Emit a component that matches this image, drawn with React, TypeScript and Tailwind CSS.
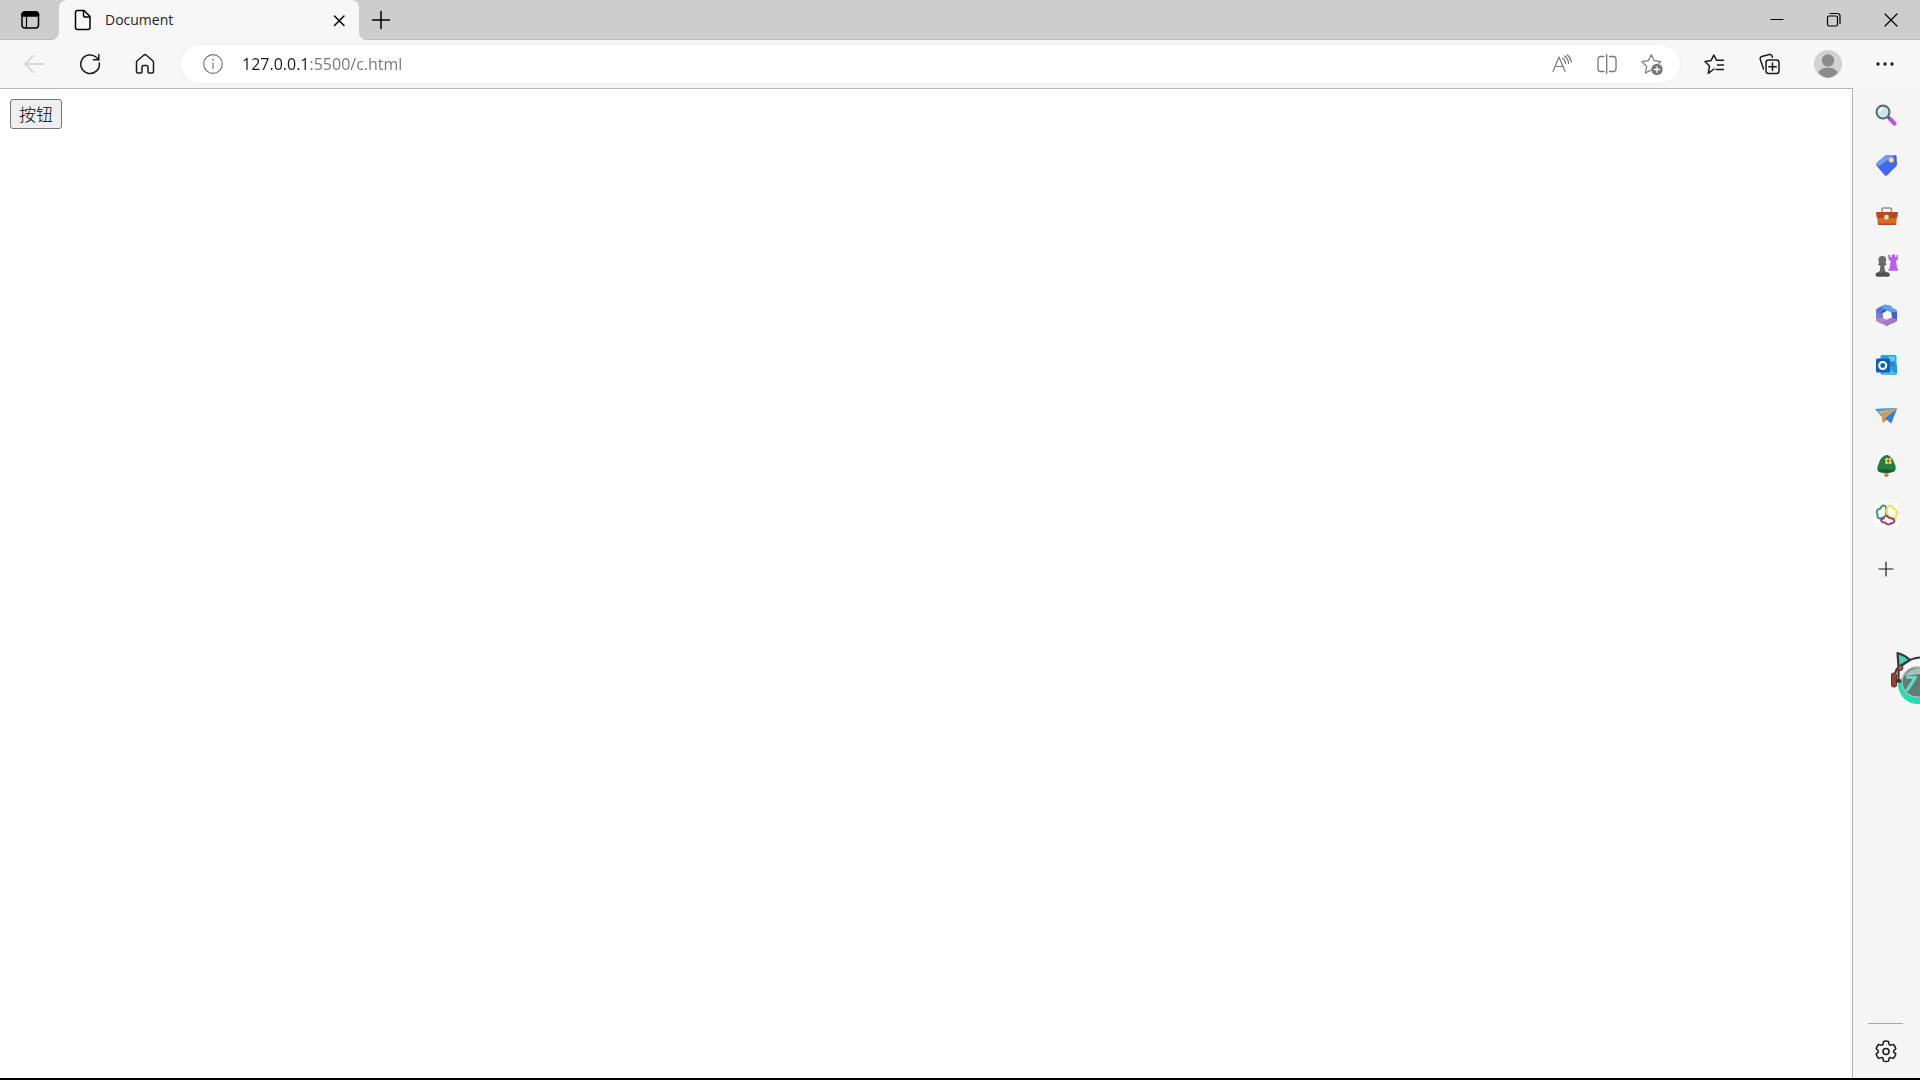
import type { ReactNode } from "react";

interface IconProps {
  size?: number;
  children: ReactNode;
}

// Stroked icon on a square grid, one unit per pixel
const LineIcon = ({ size = 24, children }: IconProps) => (
  <svg
    width={size}
    height={size}
    viewBox={`0 0 ${size} ${size}`}
    fill="none"
    stroke="currentColor"
    strokeWidth="1.5"
    strokeLinecap="round"
    strokeLinejoin="round"
    aria-hidden="true"
  >
    {children}
  </svg>
);

const ColorIcon = ({ children }: IconProps) => (
  <svg width="24" height="24" viewBox="0 0 24 24" aria-hidden="true">
    {children}
  </svg>
);

// The grey strip curves into the toolbar on both sides of the open tab
const TabStrip = () => (
  <header className="flex h-10 shrink-0 bg-[linear-gradient(#cdcdcd_50%,#f7f7f7_50%)] text-black">
    <button
      aria-label="Tab actions"
      className="flex w-[59px] items-center justify-center rounded-br-lg border-b border-[#bdbdbd] bg-[#cdcdcd]"
    >
      <LineIcon>
        <rect x="4" y="4" width="16.5" height="16" rx="3" />
        <path d="M4 8V7a3 3 0 0 1 3-3h10.500a3 3 0 0 1 3 3v1z" fill="currentColor" />
        <path d="M8.500 8v12" strokeWidth="1.2" />
      </LineIcon>
    </button>
    <div className="flex w-[300px] items-center rounded-t-lg bg-[#f7f7f7] pr-2 pl-3">
      <LineIcon>
        <path d="M6.500 2.500h6.500l6 6v11a2 2 0 0 1-2 2h-10.500a2 2 0 0 1-2-2v-15a2 2 0 0 1 2-2z" />
        <path d="M12.500 3v4.500a1.500 1.500 0 0 0 1.500 1.500h4.500" />
      </LineIcon>
      <span className="ml-2.5 flex-1 text-sm text-[#1f1f1f]">Document</span>
      <button aria-label="Close tab">
        <LineIcon>
          <path d="M7.500 8l9.500 9.500M17 8l-9.500 9.500" />
        </LineIcon>
      </button>
    </div>
    <div className="flex flex-1 rounded-bl-lg border-b border-[#bdbdbd] bg-[#cdcdcd]">
      <button aria-label="New tab" className="flex w-11 items-center justify-center">
        <LineIcon>
          <path d="M12 3.500v17M3.500 12h17" />
        </LineIcon>
      </button>
      <div className="ml-auto flex">
        <button aria-label="Minimize" className="flex w-[57px] items-center justify-center">
          <LineIcon>
            <path d="M6 11.500h12" strokeWidth="1.2" />
          </LineIcon>
        </button>
        <button aria-label="Restore" className="flex w-[57px] items-center justify-center">
          <LineIcon>
            <rect x="5.500" y="8" width="10" height="10" rx="1.500" strokeWidth="1.200" />
            <path d="M8 5.500h7.500a2.500 2.500 0 0 1 2.500 2.500v7.500" strokeWidth="1.2" />
          </LineIcon>
        </button>
        <button aria-label="Close" className="flex w-[58px] items-center justify-center">
          <LineIcon>
            <path d="M6 6l12 12M18 6L6 18" strokeWidth="1.2" />
          </LineIcon>
        </button>
      </div>
    </div>
  </header>
);

const Toolbar = () => (
  <nav className="flex h-12 shrink-0 items-center bg-[#f7f7f7] text-[#1b1b1b]">
    <div className="flex w-[181px] gap-8 pl-[22px]">
      <button aria-label="Back" className="text-[#cfcfcf]" disabled>
        <LineIcon>
          <path d="M21.500 12H3.500M11.500 3.500L3 12l8.500 8.500" />
        </LineIcon>
      </button>
      <button aria-label="Refresh">
        <LineIcon>
          <path d="M21.300 11a9.300 9.300 0 1 1-2.800-5.500l2.300 2.300" />
          <path d="M20.800 2.500v5.300h-5.500" />
        </LineIcon>
      </button>
      <button aria-label="Home">
        <LineIcon>
          <path d="M2.500 10.200a2 2 0 0 1 .7-1.500l6.500-5.500a2 2 0 0 1 2.600 0l6.500 5.500a2 2 0 0 1 .7 1.500v9.300a1.500 1.500 0 0 1-1.500 1.500h-3a1 1 0 0 1-1-1v-5a1.500 1.500 0 0 0-1.500-1.500h-3a1.500 1.500 0 0 0-1.500 1.500v5a1 1 0 0 1-1 1h-3a1.500 1.500 0 0 1-1.500-1.500z" />
        </LineIcon>
      </button>
    </div>
    <div className="flex h-[38px] flex-1 items-center rounded-full bg-white pr-4 pl-5 text-[#777777] shadow-[0_0_3px_#e8e8e8]">
      <button aria-label="Site information">
        <LineIcon>
          <circle cx="12" cy="12" r="9.300" strokeWidth="1.2" />
          <path d="M12 11v5.500" strokeWidth="1.2" />
          <circle cx="12" cy="7.800" r=".5" fill="currentColor" strokeWidth=".8" />
        </LineIcon>
      </button>
      {/* host is dark, port and path are grey */}
      <input
        type="text"
        aria-label="Address"
        defaultValue="127.0.0.1:5500/c.html"
        className="ml-[17px] min-w-0 flex-1 bg-[linear-gradient(90deg,#1b1b1b_67px,#757575_67px)] bg-clip-text text-base text-transparent outline-none"
      />
      <div className="flex gap-[21px]">
        <button aria-label="Read aloud">
          <LineIcon>
            <g strokeWidth="1.2">
              <path d="M3 19.500L9 5l6 14.500M5.200 14.500h7.800" />
              <path d="M12.500 6.200a6 6 0 0 1 3 5.300M14.500 4a9 9 0 0 1 4 7.500M17 2.800a11 11 0 0 1 4.300 7.200" />
            </g>
          </LineIcon>
        </button>
        <button aria-label="Split screen">
          <LineIcon>
            <path
              d="M9 4.500h-3.500a2.500 2.500 0 0 0-2.500 2.500v10a2.500 2.500 0 0 0 2.500 2.500h3.500M14.500 4.500h4a2.500 2.500 0 0 1 2.500 2.500v10a2.500 2.500 0 0 1-2.500 2.500h-4M11.700 2.500v19"
              strokeWidth="1.3"
            />
          </LineIcon>
        </button>
        <button aria-label="Add to favorites">
          <LineIcon>
            <path
              d="M11 18l-5.500 3 1.200-6.700L2 9.600l6.300-.9L11.300 2.800l3 5.900 6.500.9-2 2"
              strokeWidth="1.2"
            />
            <circle cx="17" cy="17.500" r="5.700" fill="currentColor" stroke="none" />
            <path d="M17 14.800v5.400M14.300 17.500h5.400" stroke="white" strokeWidth="1.300" />
          </LineIcon>
        </button>
      </div>
    </div>
    <div className="flex w-60 items-center pl-[22px]">
      <button aria-label="Favorites">
        <LineIcon>
          <path d="M12 17l-5.700 4.300 1.200-7.300-4.500-4.500 6-.9 2.800-5.600 2.700 5.200H21.500M15.500 13h6M14 17.500h7.500" />
        </LineIcon>
      </button>
      <button aria-label="Collections" className="ml-8">
        <LineIcon>
          <rect x="8" y="8" width="13" height="13.500" rx="2.500" />
          <path d="M14.500 11v7.500M10.800 14.700h7.500M5.500 17l-3.200-9.500a2.300 2.300 0 0 1 1.500-3l7.500-2a2.300 2.300 0 0 1 2.700 1.500l.4 1.200" />
        </LineIcon>
      </button>
      <button aria-label="Profile" className="ml-8">
        <svg width="28" height="28" viewBox="0 0 28 28" aria-hidden="true">
          <circle cx="14" cy="14" r="14" fill="#d2d2d2" />
          <circle cx="14" cy="10.500" r="6.200" fill="#8b8b8b" />
          <path d="M4.500 22.500c1.500-3.500 5-4.800 9.500-4.800s8 1.300 9.500 4.800A13.500 13.500 0 0 1 14 27.800a13.500 13.500 0 0 1-9.500-5.300z" fill="#8b8b8b" />
        </svg>
      </button>
      <button aria-label="Settings and more" className="ml-[31px]">
        <LineIcon>
          <g fill="currentColor" stroke="none">
            <circle cx="5" cy="12" r="1.700" />
            <circle cx="12" cy="12" r="1.700" />
            <circle cx="19" cy="12" r="1.700" />
          </g>
        </LineIcon>
      </button>
    </div>
  </nav>
);

const sidebarApps = [
  {
    name: "Search",
    icon: (
      <ColorIcon>
        <path d="M15.500 15.500l5 5" stroke="#b45bdc" strokeWidth="4.200" strokeLinecap="round" />
        <path d="M13 13l2.500 2.500" stroke="#555b60" strokeWidth="2" />
        <circle cx="9" cy="9" r="6.500" fill="#c9e5ee" stroke="#5d6468" strokeWidth="2" />
        <path d="M5.500 9a3.500 3.500 0 0 1 3.500-3.500" stroke="#f2fbfd" strokeWidth="2" fill="none" />
      </ColorIcon>
    ),
  },
  {
    name: "Shopping",
    icon: (
      <ColorIcon>
        <path d="M3 9.500L11.500 2.500Q12.500 2 14 2h7q1.500 0 1.600 1.500l.4 8q0 1-.8 1.800l-9.200 9q-1.200 1-2.400 0l-8-9.500q-1.200-1.500.4-3.300z" fill="#4865e8" />
        <path d="M3 9.500L11.500 2.500Q12.500 2 14 2h7L5.500 13l-2.600-1z" fill="#759bec" />
        <path d="M5.500 13L20 2.800 22 13l-9.500 9.300z" fill="#4168e9" />
        <circle cx="17.300" cy="7" r="2.700" fill="#f4c979" />
        <circle cx="17.300" cy="7" r="1.100" fill="#fff3d8" />
      </ColorIcon>
    ),
  },
  {
    name: "Tools",
    icon: (
      <ColorIcon>
        <path d="M8 10V6.500Q8 5 9.500 5h6.500q1.500 0 1.500 1.500V10" fill="none" stroke="#94908e" strokeWidth="1.600" />
        <path d="M3 12h20l-.7 8.500q-.1 1.500-1.600 1.500H5.300q-1.500 0-1.600-1.500z" fill="#d66c20" />
        <path d="M3 9h20q1 0 1 1l-.7 4q-.2 1-1.300 1H4q-1.100 0-1.300-1L2 10q0-1 1-1z" fill="#b74a14" />
        <path d="M3.700 20.500h18.600q-.1 1.500-1.600 1.500H5.300q-1.500 0-1.600-1.500z" fill="#b24b1a" />
        <path d="M10.300 12.500l2.200-1 2.200 1v3L12.500 17l-2.200-1.500z" fill="#dfd6cd" />
      </ColorIcon>
    ),
  },
  {
    name: "Games",
    icon: (
      <ColorIcon>
        <path d="M14 2h2.200v2h1.800V1.500h3V4h1.600V2h1.900l-1 5-1.500 1 1 6.500 1.500 3.200H14l1.700-3.200 1-6.500-1.900-1z" fill="#b660ef" />
        <circle cx="8.300" cy="7" r="3.900" fill="#6d6d6d" />
        <path d="M5 10h6.600l1 1.700-2.400 1.300.8 5 3 2.300H3l2.700-2.300.8-5L4 11.700z" fill="#666666" />
        <rect x="1.700" y="19.500" width="14" height="4.200" rx="1.600" fill="#515151" />
      </ColorIcon>
    ),
  },
  {
    name: "Microsoft 365",
    icon: (
      <ColorIcon>
        <path d="M10.500 1.700L18 3l-5 5.500-4 2v5L2.500 17 2 7q.2-1 1-1.500z" fill="#5279d1" />
        <path d="M10.500 1.700q1-.4 2 0L22 6.500q1 .6 1 1.700v4.300L16.500 9l-5-1-3.700-3.500z" fill="#55a8e5" />
        <path d="M23 9v8q0 1-1 1.600l-4 2.100.2-5-1-6.700z" fill="#4b5ec4" />
        <path d="M23 16.500q0 1-1 1.700l-8.500 4.600q-1 .5-2 0L8 20l5-3.700 4.500-1.500z" fill="#a976c7" />
        <path d="M2 7.500l5 4 2 4.500 5 .6-6 4.400L3 18.200q-1-.7-1-1.700z" fill="#8979cb" />
        <path d="M2 15.500l7-.5 4.500 1.500-6.500 4L3 18.300q-1-.8-1-1.800z" fill="#b783cc" />
        <path d="M8.500 9l4-1.500 4.200 2 .5 4-4.500 3.300L9 15z" fill="#f7f7f7" />
        <path d="M7 9.500l4-3.500 1.500 1.700-3.500 2.300z" fill="#2953ae" />
      </ColorIcon>
    ),
  },
  {
    name: "Outlook",
    icon: (
      <ColorIcon>
        <rect x="6.500" y="2" width="16" height="19.500" rx="1.500" fill="#329fdc" />
        <path d="M14.500 3.500h6.500v5h-6.500z" fill="#63cceb" />
        <path d="M14.500 8.500H21v5h-6.500z" fill="#2386cc" />
        <path d="M7 21.500L23 11.500V20q0 1.500-1.500 1.500z" fill="#2497df" />
        <path d="M15 15.500l8 5.500q-.5.600-1.500.600H7z" fill="#50bced" />
        <rect x="2" y="5.500" width="14" height="14" rx="1.500" fill="#1260b5" />
        <circle cx="8.700" cy="12.500" r="3.500" fill="none" stroke="white" strokeWidth="2.100" />
      </ColorIcon>
    ),
  },
  {
    name: "Drop",
    icon: (
      <ColorIcon>
        <path d="M1 6l22-1-14.500 7z" fill="#58a8d9" />
        <path d="M1 6l6.500 7.500L23 5z" fill="#4599c9" />
        <path d="M7.500 13.500L23 5 11.500 15.500 8.700 20z" fill="#dd9d4c" />
        <path d="M3.500 8.500L23 5 7.500 12z" fill="#d5a665" />
        <path d="M23.300 5l-6 15.500-6.500-5z" fill="#3480d9" />
        <path d="M8.700 20l2.100-4.500 1.800 1.300z" fill="#b7793b" />
      </ColorIcon>
    ),
  },
  {
    name: "Tree",
    icon: (
      <ColorIcon>
        <path d="M10.300 17h4.200v5.500q0 1.500-2.100 1.500t-2.100-1.500z" fill="#c98b48" />
        <path d="M10 3q2.500-2 5.500 0 3.500 2.200 4.500 6.500 2 2.500 1.700 5.500-.5 4-5.200 4.500-4.500.500-9 0-4-.5-4-4.500 0-2.500 1.500-5 1-5 5-7z" fill="#247c42" />
        <path d="M3.500 15q2 2.500 6 1.500t6 .5q3 1 6.200-1.500-.8 3.600-5.200 4-4.500.500-9 0-4-.5-4-4.500z" fill="#165f35" />
        <g fill="#e8d25a">
          <circle cx="12.700" cy="6.500" r="1.700" />
          <circle cx="16" cy="6.500" r="1.700" />
          <circle cx="12.700" cy="9.500" r="1.700" />
          <circle cx="16" cy="9.500" r="1.700" />
        </g>
        <circle cx="14.400" cy="8" r="1.300" fill="#b34625" />
      </ColorIcon>
    ),
  },
  {
    name: "Clover",
    icon: (
      <ColorIcon>
        <rect x="0" y="0" width="24" height="24" fill="#fefefe" />
        <g fill="none" strokeWidth="1.900" strokeLinecap="round" strokeLinejoin="round">
          <path d="M12 11q1-5-.5-7.500-2-2-4 0-.5 1-1 2-4 .5-3.800 4 .3 1.800 1 2-1 3 1.300 4Q8.500 16 12 12.500" stroke="#41947b" />
          <path d="M13 11q-.5-6 1-7.500 2.500-2.200 4.500 0 .7 1 .8 2.200 3.500 0 3.900 3.800-.2 1.500-1 2 .5 3.200-2.200 3.500-3.500-.2-7-3.500" stroke="#eee34d" />
          <path d="M12.500 12.500q2 3 6 3.200 2.500 1 1.700 3-1 2-3 1.500-1.700 1.800-3.900 1-2-.7-2-1.700-3.300.5-4.300-2 0-2 3-2.300" stroke="#a43266" />
        </g>
      </ColorIcon>
    ),
  },
];

const Sidebar = () => (
  <aside className="flex w-[68px] shrink-0 flex-col items-center border-l border-[#b5b5b5] bg-[#f5f5f5] pt-0.5 pr-0.5 text-[#1b1b1b]">
    {sidebarApps.map((app) => (
      <button key={app.name} aria-label={app.name} className="flex h-[50px] w-full items-center justify-center">
        {app.icon}
      </button>
    ))}
    <button aria-label="Customize" className="mt-1 flex h-[50px] w-full items-center justify-center">
      <LineIcon>
        <path d="M12 5v14M5 12h14" strokeWidth="1.2" />
      </LineIcon>
    </button>
    <hr className="mt-auto w-[35px] border-[#a8a8a8]" />
    <button aria-label="Settings" className="flex h-[54px] w-full items-center justify-center">
      <LineIcon>
        <path d="M9.500 2.500Q12 1.600 14.500 2.500L15 5.300q.3 1 1.500.9l2.800-.8q2 2 2.500 4.300l-2 2q-.6.700 0 1.400l2 2q-.7 2.500-2.500 4.300l-2.800-.8q-1.100-.1-1.500.9l-.5 2.600q-2.500.9-5 0L9 19.500q-.4-1-1.500-.9l-2.800.8q-1.800-1.800-2.500-4.300l2-2q.6-.7 0-1.400l-2-2q.5-2.300 2.500-4.300l2.800.8q1.200.1 1.500-.9z" />
        <circle cx="12" cy="12.400" r="3" />
      </LineIcon>
    </button>
  </aside>
);

// Floating desktop pet, half hidden behind the window's right edge
const CatWidget = () => (
  <svg
    className="fixed top-[650px] right-0"
    width="30"
    height="56"
    viewBox="0 0 30 56"
    role="img"
    aria-label="Cat"
  >
    <circle cx="28" cy="34" r="20" fill="#25dcb2" />
    <path d="M8 32V18Q16 8 30 7.500V32z" fill="#fbfbfb" />
    <path d="M8.500 30v-9Q14 9 30 7.500" fill="none" stroke="#383838" strokeWidth="2.200" />
    <path d="M7.500 3q7 2 12.500 7L8.500 17z" fill="#46d3b0" stroke="#383838" strokeWidth="2.200" strokeLinejoin="round" />
    <path d="M5.500 23Q6 18 10.500 17" fill="none" stroke="#502f28" strokeWidth="2.200" />
    <circle cx="10.500" cy="18" r="2.500" fill="#bd5235" stroke="#463632" />
    <rect x="1.500" y="23" width="5" height="14" rx="2" fill="#91442f" stroke="#593128" />
    <path d="M6 31h7" stroke="#383838" strokeWidth="3.500" />
    <circle cx="27" cy="32" r="15" fill="#607c77" stroke="#a7bdb7" strokeWidth="1.500" />
    <path d="M15 26q5-8 15-8v6z" fill="#a9bfba" />
    <text x="14" y="41" fontSize="22" fontStyle="italic" fontWeight="700" fill="#64dec2">
      7
    </text>
  </svg>
);

export default function App() {
  return (
    <div className="flex min-h-screen flex-col border-b-2 border-black bg-[#f7f7f7] font-['Open_Sans','Noto_Sans_CJK_SC',sans-serif]">
      <TabStrip />
      <Toolbar />
      <div className="flex flex-1">
        <main className="flex-1 border-t border-[#b5b5b5] bg-white px-2.5 py-2.5">
          <button className="flex h-[30px] items-center rounded-[3px] border border-[#767676] bg-[#efefef] px-2 font-['Noto_Sans_CJK_SC',sans-serif] text-[17px] leading-6 font-light text-black">
            按钮
          </button>
        </main>
        <Sidebar />
      </div>
      <CatWidget />
    </div>
  );
}
